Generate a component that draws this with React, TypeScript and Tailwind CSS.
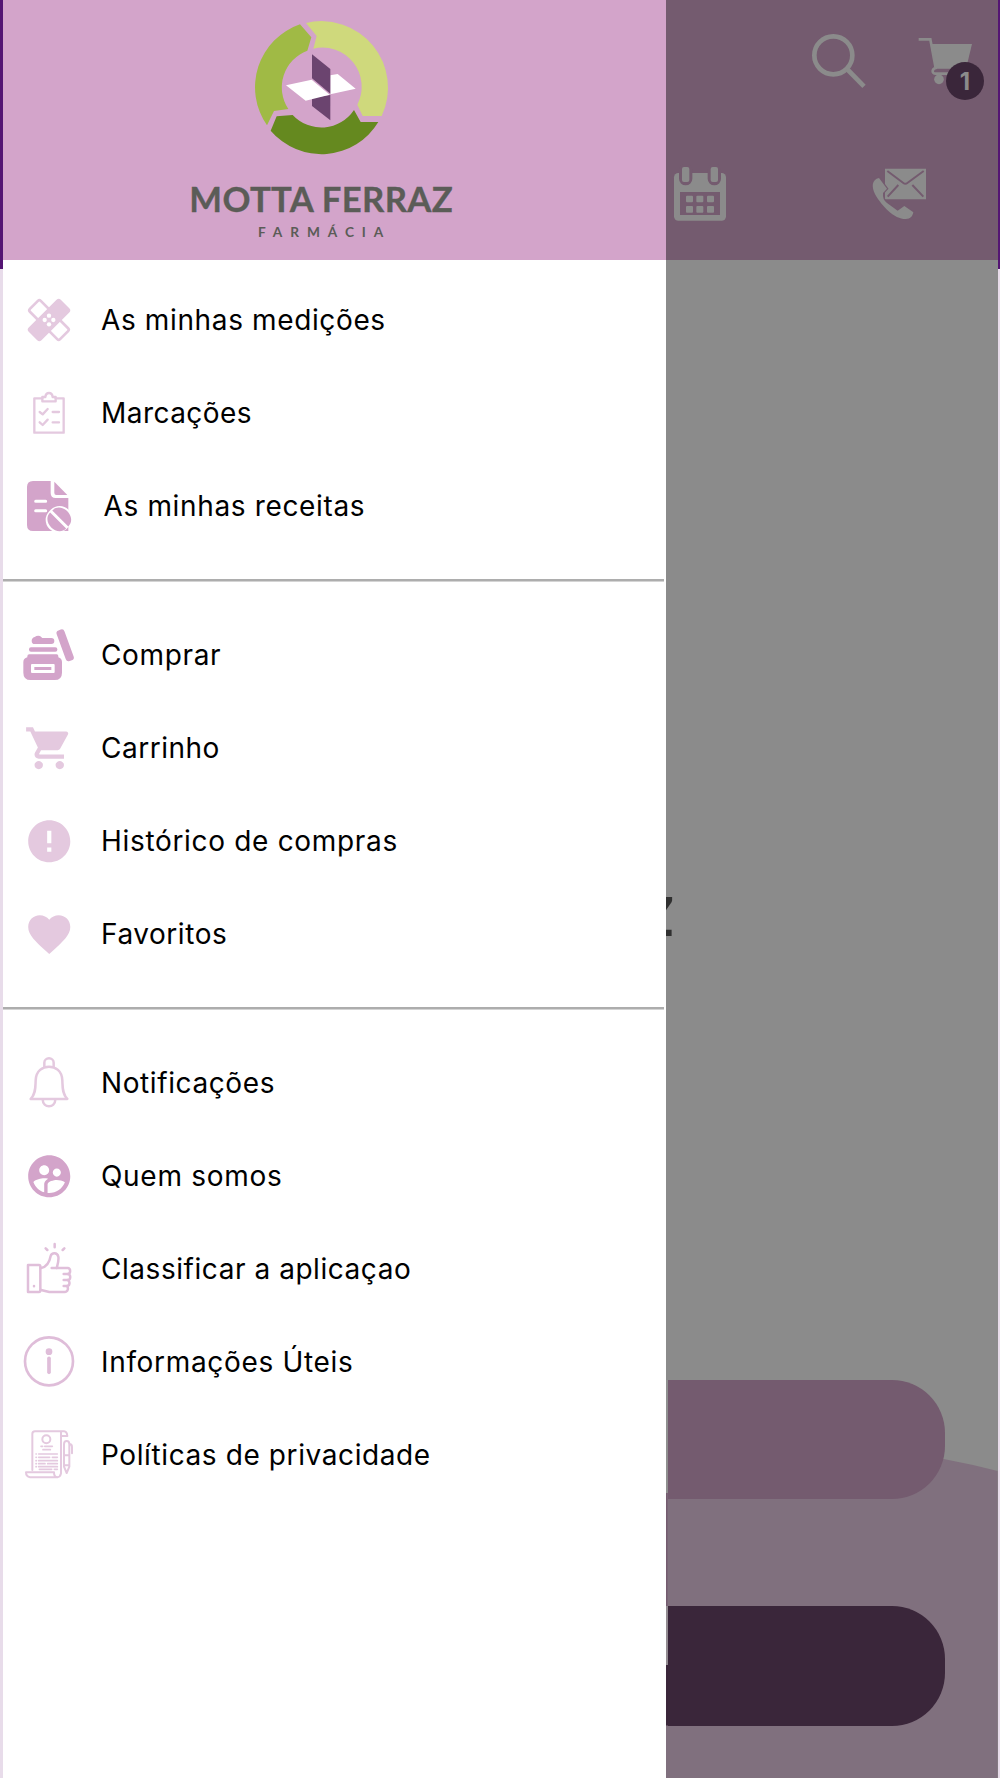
import React from 'react';
import { MdShoppingCart, MdError, MdFavorite, MdSupervisedUserCircle } from 'react-icons/md';

interface DrawerItem {
  label: string;
  icon: React.ReactNode;
  className: string;
}

const Logo: React.FC = () => (
  <svg className="w-[300px] h-[260px]" viewBox="0 0 900 780">
    <path fill="#cfd97c" d="M408 69A199.500 199.500 0 0 1 635 348H578L562 314A117.500 117.500 0 0 0 430 146L440 108Z" />
    <path fill="#a0ba45" d="M390 73L424 112L412 152A117.500 117.500 0 0 0 355 327L312 333L291 376A199.500 199.500 0 0 1 390 73Z" />
    <path fill="#65891f" d="M302 392L320 349L368 345A117.500 117.500 0 0 0 552 330L572 366H625A199.500 199.500 0 0 1 302 392Z" />
    <path fill="#6b446f" d="M426 293L481 285V361L426 318Z" />
    <path fill="#fff" d="M348 256L425 239L479 284L407 302ZM481 226L503 222L557 266L481 283Z" />
    <path fill="#6b446f" d="M426 163L481 207V281L426 235Z" />
    <text x="58" y="635" fill="#5b5c57" stroke="#5b5c57" strokeWidth="1" fontFamily="Lato" fontWeight="700" fontSize="104" textLength="790">MOTTA FERRAZ</text>
    <text x="264" y="711" fill="#5b5c57" fontFamily="Lato" fontWeight="700" fontSize="41" textLength="376">FARMÁCIA</text>
  </svg>
);

const BandageIcon = () => (
  <svg className="size-[60px]" viewBox="57 150 180 180">
    <rect x="83" y="217" width="128" height="46" rx="6" fill="none" stroke="#e4c9df" strokeWidth="8" transform="rotate(45 147 240)" />
    <rect x="79" y="213" width="136" height="54" rx="9" fill="#e4c9df" transform="rotate(-45 147 240)" />
    <g fill="#fff">
      <circle cx="147" cy="227" r="6.500" />
      <circle cx="134" cy="240" r="6.500" />
      <circle cx="160" cy="240" r="6.500" />
      <circle cx="147" cy="253" r="6.500" />
    </g>
  </svg>
);

const ClipboardIcon = () => (
  <svg className="size-[60px]" viewBox="57 429 180 180" fill="none" stroke="#e4c9df" strokeWidth="7" strokeLinejoin="round" strokeLinecap="round">
    <path d="M127 475H103V578H191V475H167" />
    <path d="M127 484V471H136C138 455 156 455 158 471H167V484Z" />
    <path d="M119 516L128 523L143 507M119 547L128 555L143 539M158 516H177M158 547H177" />
  </svg>
);

const PrescriptionIcon = () => (
  <svg className="size-[60px]" viewBox="57 708 180 180">
    <path fill="#d3a4ca" d="M99 723H152V759Q152 774 167 774H205V873H99Q81 873 81 855V741Q81 723 99 723Z" />
    <path fill="#d3a4ca" d="M163 725L202 765H169Q163 765 163 759Z" />
    <path stroke="#fff" strokeWidth="9" strokeLinecap="round" d="M107 784H137M107 812H137" />
    <path stroke="#fff" strokeWidth="74" strokeLinecap="round" d="M174 840L179 835" />
    <path fill="#d3a4ca" transform="rotate(45 178 838)" d="M144 834C144 794 212 794 212 834ZM144 843C144 882 212 882 212 843Z" />
  </svg>
);

const CreamIcon = () => (
  <svg className="size-[60px]" viewBox="57 45 180 180">
    <g fill="#d3a4ca">
      <path d="M104 81Q112 75 120 78L127 84H154Q163 84 163 93Q163 102 154 102H104Q95 102 95 92Q95 84 104 81Z" />
      <rect x="87" y="112" width="85" height="13" rx="6" />
      <path d="M82 139Q82 133 88 133H170Q175 133 175 139V142Q186 146 186 156V188Q186 210 164 210H92Q70 210 70 188V156Q70 145 82 142Z" />
      <rect x="183" y="57" width="25" height="98" rx="9" transform="rotate(-20 195.500 106)" />
    </g>
    <rect x="93" y="162" width="71" height="27" rx="3" fill="#fff" />
    <rect x="103" y="171" width="51" height="9" fill="#d3a4ca" />
  </svg>
);

const BellIcon = () => (
  <svg className="size-[60px]" viewBox="57 69 180 180" fill="none" stroke="#e4c9df" strokeWidth="7.500" strokeLinejoin="round">
    <path d="M133 113V98A14 13 0 0 1 161 98V113" />
    <path d="M92 207C108 192 106 170 107 151C108 122 128 110 147 110C166 110 186 122 187 151C188 170 186 192 202 207Z" />
    <path d="M128 208C129 236 165 236 166 208" />
  </svg>
);

const ThumbIcon = () => (
  <svg className="size-[60px]" viewBox="57 27 180 180" fill="none" stroke="#e0bfda" strokeWidth="7.500" strokeLinejoin="round" strokeLinecap="round">
    <path d="M84 105H117Q121 105 121 109V181Q121 186 117 186H84Z" />
    <path d="M123 114C142 111 149 94 152 78C155 67 172 66 175 80C177 93 173 103 170 114H204C213 116 212 131 204 132C213 134 213 150 203 150C211 153 210 168 201 168C206 174 204 186 194 186H148L123 180" />
    <path d="M204 132H191M203 150H191M201 168H191M155 114H170" />
    <path d="M102 168V169M164 42V52M137 55L142 60M193 55L188 60" />
  </svg>
);

const InfoIcon = () => (
  <svg className="size-[60px]" viewBox="57 306 180 180">
    <circle cx="147" cy="394" r="72" fill="none" stroke="#dfbdd9" strokeWidth="8" />
    <circle cx="147" cy="365" r="10" fill="#dfbdd9" />
    <path d="M147 385V427" stroke="#dfbdd9" strokeWidth="11" strokeLinecap="round" />
  </svg>
);

const PolicyIcon = () => (
  <svg className="size-[60px]" viewBox="57 585 180 180" fill="none" stroke="#e4c9df" strokeWidth="6" strokeLinejoin="round" strokeLinecap="round">
    <path d="M97 720V612Q97 604 105 604H192Q201 605 202 618H183M183 605V730Q181 741 171 742H90Q78 740 78 727H162Q162 741 172 742" />
    <circle cx="139" cy="628" r="12" />
    <path strokeWidth="5" d="M123 649H128M134 649H157M129 659H151M108 672H109M116 672H172M108 682H109M116 682H149M157 682H172M108 692H109M116 692H172M108 701H109M116 701H135M143 701H172M108 710H109M116 710H172M118 718H155M163 718H172" />
    <path d="M192 643Q192 633 200 633Q208 633 208 643V710L200 729L192 710ZM192 676H208M192 706H208M208 642Q216 642 216 651V670" />
  </svg>
);

const SearchIcon = () => (
  <svg className="w-[58px] h-[58px]" viewBox="510 96 174 174" fill="none" stroke="#8b8b8b">
    <circle cx="580" cy="166" r="57" strokeWidth="14" />
    <path d="M621 207L672 259" strokeWidth="14" />
  </svg>
);

const BasketIcon = () => (
  <svg className="w-[70px] h-[69px]" viewBox="828 96 210 207">
    <path d="M836 118H871L887 204C876 206 874 221 887 221H985" fill="none" stroke="#8b8b8b" strokeWidth="8" />
    <path d="M873 132H996L978 206H887Z" fill="#8b8b8b" />
    <circle cx="897" cy="238" r="14.500" fill="#8b8b8b" />
  </svg>
);

const CalendarIcon = () => (
  <svg className="w-[56px] h-[60px]" viewBox="96 492 168 180">
    <rect x="102" y="519" width="156" height="143" rx="13" fill="#8b8b8b" />
    <path d="M137 510V536M223 510V536" stroke="#745b6f" strokeWidth="40" strokeLinecap="round" />
    <rect x="126" y="501" width="22" height="45" rx="6" fill="#8b8b8b" />
    <rect x="212" y="501" width="22" height="45" rx="6" fill="#8b8b8b" />
    <rect x="120" y="576" width="120" height="69" fill="#745b6f" />
    <g fill="#8b8b8b">
      <rect x="138" y="587" width="21" height="20" rx="3" />
      <rect x="169" y="587" width="21" height="20" rx="3" />
      <rect x="201" y="587" width="21" height="20" rx="3" />
      <rect x="138" y="618" width="21" height="20" rx="3" />
      <rect x="169" y="618" width="21" height="20" rx="3" />
      <rect x="201" y="618" width="21" height="20" rx="3" />
    </g>
  </svg>
);

const ContactIcon = () => (
  <svg className="w-[58px] h-[60px]" viewBox="690 492 174 180">
    <path d="M735 506H858V598H735Z" fill="#8b8b8b" />
    <path d="M742 513L790 549Q796 554 802 549L851 513M743 590L775 555M850 590L817 555" fill="none" stroke="#745b6f" strokeWidth="6" />
    <path d="M717 534L741 566L729 579Q727 599 741 609L773 632L793 618L820 637C818 648 812 657 797 657C762 657 727 619 706 584C694 560 695 539 717 534Z" fill="#8b8b8b" stroke="#745b6f" strokeWidth="7" paintOrder="stroke" />
  </svg>
);

const sections: DrawerItem[][] = [
  [
    { label: 'As minhas medições', icon: <BandageIcon />, className: 'tracking-[0.63px]' },
    { label: 'Marcações', icon: <ClipboardIcon />, className: 'tracking-[0.45px]' },
    { label: 'As minhas receitas', icon: <PrescriptionIcon />, className: 'pl-[2.5px] tracking-[0.65px]' },
  ],
  [
    { label: 'Comprar', icon: <CreamIcon />, className: 'tracking-[0.65px]' },
    { label: 'Carrinho', icon: <MdShoppingCart className="size-[50.5px] text-[#e4c9df]" />, className: 'tracking-[0.5px]' },
    { label: 'Histórico de compras', icon: <MdError className="size-[50.5px] text-[#e4c9df]" />, className: 'tracking-[0.68px]' },
    { label: 'Favoritos', icon: <MdFavorite className="size-[50.5px] text-[#e4c9df]" />, className: 'tracking-[0.55px]' },
  ],
  [
    { label: 'Notificações', icon: <BellIcon />, className: 'tracking-[0.6px]' },
    { label: 'Quem somos', icon: <MdSupervisedUserCircle className="size-[50.5px] text-[#d3a4ca]" />, className: 'tracking-[0.7px]' },
    { label: 'Classificar a aplicaçao', icon: <ThumbIcon />, className: 'tracking-[0.55px]' },
    { label: 'Informações Úteis', icon: <InfoIcon />, className: 'tracking-[0.67px]' },
    { label: 'Políticas de privacidade', icon: <PolicyIcon />, className: 'tracking-[0.6px]' },
  ],
];

const Drawer: React.FC = () => (
  <aside className="w-[663.4px] shrink-0 bg-white">
    <header className="h-[260px] bg-[#d3a4ca] pl-[167px]">
      <Logo />
    </header>
    <nav className="pt-[13.5px]">
      {sections.map((items, index) => (
        <div key={index}>
          {index > 0 && <hr className="my-[26.5px] mr-[2.5px] h-[3px] border-0 border-b border-[#d4d4d4] bg-[#adadad]" />}
          {items.map((item) => (
            <a key={item.label} className="flex h-[93px] items-center gap-[22px] pl-4">
              <span className="flex size-[60px] shrink-0 items-center justify-center">{item.icon}</span>
              <span className={`text-[28px] whitespace-nowrap text-black ${item.className}`}>{item.label}</span>
            </a>
          ))}
        </div>
      ))}
    </nav>
  </aside>
);

// the home screen, dimmed behind the open drawer
const HomeScreen: React.FC = () => (
  <section className="flex min-w-0 flex-1 flex-col overflow-hidden bg-[#8b8b8b]">
    <header className="h-[260px] shrink-0 bg-[#745b6f] pt-8">
      <div className="flex items-start justify-end gap-12 pr-3">
        <SearchIcon />
        <div className="relative">
          <BasketIcon />
          <span className="absolute top-[29.5px] left-[30px] flex size-[38px] items-center justify-center rounded-full bg-[#3a263a] pt-[2px] text-[24px] font-bold text-[#8b8b8b]">
            1
          </span>
        </div>
      </div>
      <div className="mt-[63px] flex gap-[142px] pl-[6px]">
        <CalendarIcon />
        <ContactIcon />
      </div>
    </header>
    {/* last letter of the brand name, the rest is under the drawer */}
    <div className="mt-[620px] flex h-[72px] w-[7px] shrink-0 items-center justify-end font-['Lato'] text-[53px] font-black text-[#303030]">
      Z
    </div>
    <div className="relative mt-[428px] flex-1">
      <svg className="absolute inset-0 size-full" viewBox="0 0 332 398" preserveAspectRatio="none">
        <path d="M0 113V60Q150 56 278 79Q305 84 332 91V398H0Z" fill="#80707e" />
        <path d="M0 0H2V113H0Z" fill="#8f8f8f" />
        <path d="M0 113H1.500V226H0Z" fill="#745b6f" />
        <path d="M0 226H2V285H0Z" fill="#928b91" />
        <path d="M0 285H2V345.500H0Z" fill="#3a263a" />
      </svg>
      <div className="relative flex flex-col gap-[107px] pl-[1.5px]">
        <div className="h-[119px] w-[277px] rounded-r-[53px] bg-[#745b6f]" />
        <div className="h-[119.5px] w-[277px] rounded-r-[53px] bg-[#3a263a]" />
      </div>
    </div>
  </section>
);

const EdgeStrip: React.FC<{ className: string }> = ({ className }) => (
  <div className={`flex shrink-0 flex-col ${className}`}>
    <div className="h-[269px] bg-[#541573]" />
    <div className="flex-1 bg-[#e8dcea]" />
  </div>
);

const App: React.FC = () => {
  return (
    <div className="flex h-[1778px] w-[1000px] overflow-hidden bg-white font-['Inter',sans-serif]">
      <EdgeStrip className="w-[3px]" />
      <Drawer />
      <HomeScreen />
      <EdgeStrip className="w-[2px]" />
    </div>
  );
};

export default App;
